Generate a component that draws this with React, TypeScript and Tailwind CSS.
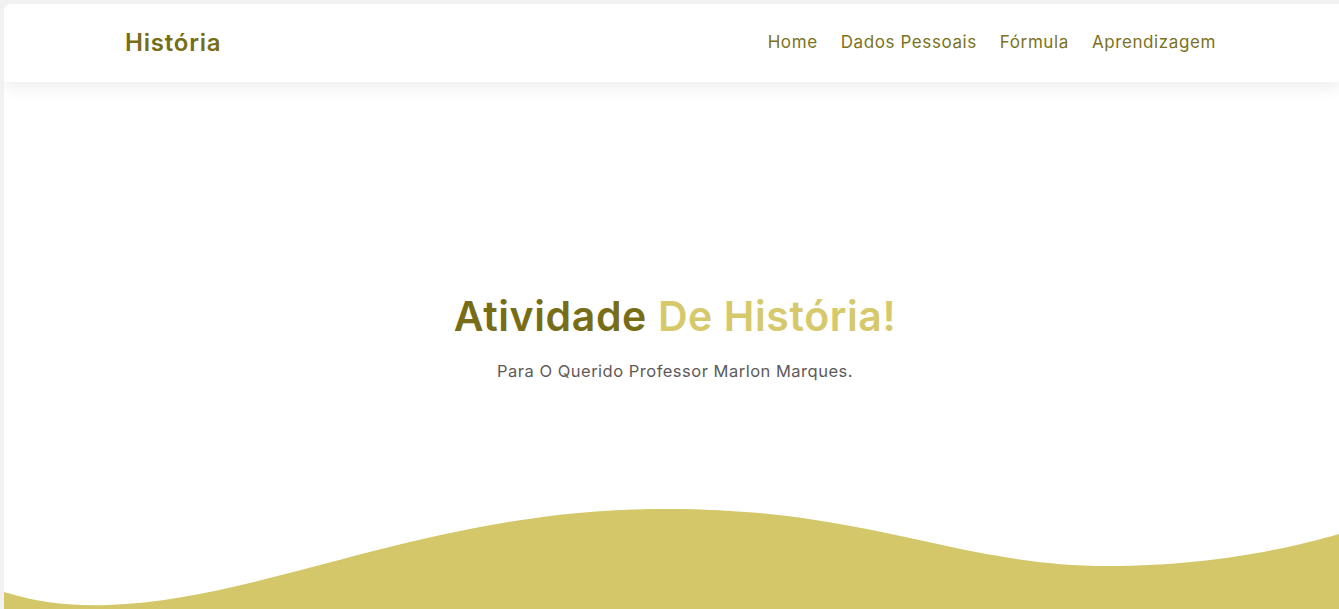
import React from 'react';

const navLinks = ['Home', 'Dados Pessoais', 'Fórmula', 'Aprendizagem'];

const Wave: React.FC = () => (
  <svg
    className="block w-full h-[109px] mt-auto"
    viewBox="0 0 1335 109"
    preserveAspectRatio="none"
  >
    <path
      fill="#d3c76a"
      d="M0,92 C40,104 70,106 104,105 C260,100 420,12 649,9 C860,6 950,66 1104,66 C1200,66 1280,50 1335,34 L1335,109 L0,109 Z"
    />
  </svg>
);

export default function App() {
  return (
    <div
      className="h-[609px] w-full overflow-hidden bg-[#f1f1f1] pl-1 pt-1"
      style={{ fontFamily: '"Inter", "Noto Sans", sans-serif' }}
    >
      <div className="h-full bg-white rounded-tl-lg overflow-hidden flex flex-col">
        {/* header */}
        <header className="relative z-10 h-[78px] shrink-0 bg-white shadow-[0_6px_14px_rgba(0,0,0,0.07)]">
          <div className="h-full pl-[121px] pr-[123px] flex items-center justify-between">
            <span className="text-[24px] font-semibold text-[#786d17] tracking-[0.8px]">História</span>
            <nav className="flex items-center gap-[23px]">
              {navLinks.map((l) => (
                <a key={l} href="#" className="text-[17px] tracking-[0.6px] text-[#7b7222]">
                  {l}
                </a>
              ))}
            </nav>
          </div>
        </header>

        {/* hero */}
        <section className="flex-1 flex flex-col">
          <div className="pt-[210px] pl-[7px] flex flex-col items-center text-center">
            <h1 className="text-[41px] leading-[48px] font-semibold tracking-[0.6px] mb-[19px]">
              <span className="text-[#786d17]">Atividade</span>{' '}
              <span className="text-[#d6c96c]">De História!</span>
            </h1>
            <p className="text-[16.5px] leading-6 tracking-[0.5px] text-[#5e5a5a]">
              Para O Querido Professor Marlon Marques.
            </p>
          </div>
          <Wave />
        </section>
      </div>
    </div>
  );
}
